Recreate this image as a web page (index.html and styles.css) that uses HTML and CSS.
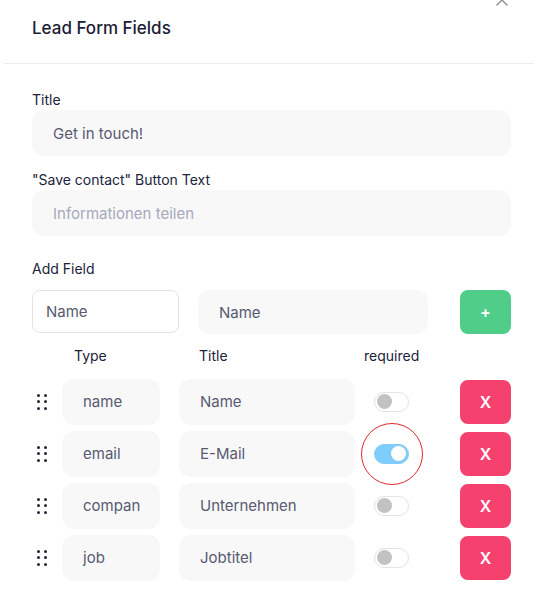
FILE: index.html
```html
<!DOCTYPE html>
<html lang="de">
<head>
<meta charset="utf-8">
<title>Lead Form Fields</title>
<link rel="stylesheet" href="styles.css">
</head>
<body>
<div class="modal">
  <div class="header">
    <h2 class="title">Lead Form Fields</h2>
    <svg class="close" width="14" height="14" viewBox="0 0 14 14"><path d="M2 2L12 12M12 2L2 12" stroke="#8a8a94" stroke-width="1.4" fill="none" stroke-linecap="round"/></svg>
  </div>
  <div class="content">
    <label class="label">Title</label>
    <div class="input big">Get in touch!</div>
    <label class="label l2">"Save contact" Button Text</label>
    <div class="input big placeholder">Informationen teilen</div>

    <label class="label l3">Add Field</label>
    <div class="add-row">
      <div class="select">Name</div>
      <div class="input add-title">Name</div>
      <button class="btn add">+</button>
    </div>

    <div class="head-row">
      <span class="h-type">Type</span>
      <span class="h-title">Title</span>
      <span class="h-req">required</span>
    </div>

    <div class="rows">
      <div class="row">
        <span class="handle"><i></i><i></i><i></i><i></i><i></i><i></i></span>
        <div class="input type">name</div>
        <div class="input ftitle">Name</div>
        <span class="toggle"><b></b></span>
        <button class="btn del">X</button>
      </div>
      <div class="row">
        <span class="handle"><i></i><i></i><i></i><i></i><i></i><i></i></span>
        <div class="input type">email</div>
        <div class="input ftitle">E-Mail</div>
        <span class="toggle on"><b></b><span class="ring"></span></span>
        <button class="btn del">X</button>
      </div>
      <div class="row">
        <span class="handle"><i></i><i></i><i></i><i></i><i></i><i></i></span>
        <div class="input type">compan</div>
        <div class="input ftitle">Unternehmen</div>
        <span class="toggle"><b></b></span>
        <button class="btn del">X</button>
      </div>
      <div class="row">
        <span class="handle"><i></i><i></i><i></i><i></i><i></i><i></i></span>
        <div class="input type">job</div>
        <div class="input ftitle">Jobtitel</div>
        <span class="toggle"><b></b></span>
        <button class="btn del">X</button>
      </div>
    </div>
  </div>
</div>
</body>
</html>
```

FILE: styles.css
```css
* { box-sizing: border-box; }
html, body { margin: 0; padding: 0; background: #fff; }
body {
  font-family: Inter, "Noto Sans", "Liberation Sans", sans-serif;
  color: #1e2133;
  width: 534px;
  height: 607px;
  overflow: hidden;
}
.modal { position: relative; }
.header {
  position: relative;
  margin-left: 3px;
  height: 64px;
  border-bottom: 1px solid #eeeeee;
  padding-left: 29px;
  display: flex;
  align-items: flex-start;
}
.title {
  margin: 17px 0 0;
  font-size: 17px;
  font-weight: 500;
  line-height: 22px;
  color: #1d2034;
}
.close { position: absolute; right: 25px; top: -7px; }
.content {
  padding: 26px 23px 0 32px;
  display: flex;
  flex-direction: column;
}
.label {
  font-size: 14px;
  line-height: 20px;
  color: #20233a;
  margin-bottom: 0;
}
.l2 { margin-top: 14px; }
.l3 { margin-top: 23px; margin-bottom: 11px; }
.input {
  background: #f8f8f8;
  border-radius: 12px;
  font-size: 15px;
  color: #575a70;
  display: flex;
  align-items: center;
  padding-left: 21px;
}
.big { height: 46px; }
.placeholder { color: #a6a8bd; }
.add-row { display: flex; align-items: flex-start; }
.select {
  width: 147px;
  height: 43px;
  border: 1px solid #e2e2ea;
  border-radius: 8px;
  font-size: 15px;
  color: #575a70;
  display: flex;
  align-items: center;
  padding-left: 13px;
}
.add-title { width: 230px; height: 44px; margin-left: 19px; }
.btn {
  border: 0;
  border-radius: 8px;
  color: #fff;
  font-family: Inter, "Noto Sans", sans-serif;
  font-size: 15px;
  font-weight: 600;
  width: 51px;
  height: 44px;
  margin-left: auto;
  padding: 0;
}
.add { background: #4fcd89; font-size: 16px; }
.del { background: #f4416e; font-size: 16px; }
.head-row {
  margin-top: 12px;
  height: 20px;
  font-size: 14px;
  line-height: 20px;
  color: #20233a;
  position: relative;
  display: flex;
}
.h-type { margin-left: 42px; width: 125px; }
.h-title { width: 165px; }
.rows { margin-top: 13px; display: flex; flex-direction: column; gap: 7px; }
.row { display: flex; align-items: center; height: 45px; }
.handle {
  width: 30px;
  padding-left: 5px;
  display: grid;
  grid-template-columns: 3px 3px;
  column-gap: 3.5px;
  row-gap: 3.5px;
}
.handle i { display: block; width: 3px; height: 3px; border-radius: 50%; background: #232538; }
.type { width: 98px; height: 46px; }
.ftitle { width: 176px; height: 46px; margin-left: 19px; }
.toggle {
  position: relative;
  margin-left: 19px;
  width: 35px;
  height: 20px;
  border-radius: 10px;
  border: 1px solid #e2e2ea;
  background: #fff;
}
.toggle b {
  position: absolute;
  left: 2px;
  top: 1.5px;
  width: 15px;
  height: 15px;
  border-radius: 50%;
  background: #c2c2c2;
}
.toggle.on { background: #7ecdfb; border-color: #7ecdfb; }
.toggle.on b { left: auto; right: 2px; background: #fff; }
.ring {
  position: absolute;
  left: -14px;
  top: -22px;
  width: 62px;
  height: 62px;
  border-radius: 50%;
  border: 1px solid #e02828;
}
```
